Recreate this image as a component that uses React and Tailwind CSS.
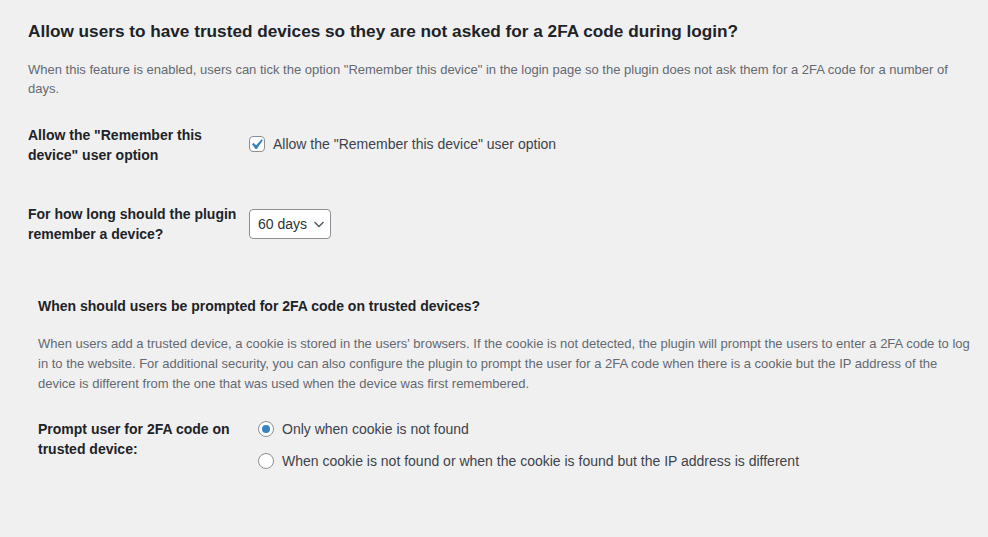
import React, { useState } from "react";

function Checkbox({ checked, onChange }) {
    return (
        <button
            type="button"
            onClick={onChange}
            className="w-4 h-4 shrink-0 bg-white border border-[#8c8f94] rounded-[4px] flex items-center justify-center overflow-visible"
        >
            {checked && (
                <svg className="shrink-0 -ml-[1px]" width="21" height="21" viewBox="0 0 20 20">
                    <path d="M14.83 4.89l1.34.94-5.81 8.38H9.02L5.78 9.67l1.34-1.25 2.57 2.4z" fill="#3582c4" />
                </svg>
            )}
        </button>
    );
}

function Radio({ checked, onClick }) {
    return (
        <button
            type="button"
            onClick={onClick}
            className="w-4 h-4 shrink-0 bg-white border border-[#8c8f94] rounded-full flex items-center justify-center"
        >
            {checked && <span className="w-2 h-2 rounded-full bg-[#3582c4]" />}
        </button>
    );
}

export default function App() {
    const [remember, setRemember] = useState(true);
    const [prompt, setPrompt] = useState("cookie");

    return (
        <div className="min-h-[537px] bg-[#f0f0f1] text-[#3c434a] font-['Liberation_Sans',sans-serif]">
            <div className="pl-[28px] pr-[20px] pt-[19px]">
                <h2 className="text-[17.2px] font-semibold text-[#1d2327] leading-[24px]">
                    Allow users to have trusted devices so they are not asked for a 2FA code during login?
                </h2>
                <p className="mt-[17px] text-[13px] leading-[19px] text-[#646970]">
                    When this feature is enabled, users can tick the option "Remember this device" in the login page so the plugin does not ask them for a 2FA code for a number of days.
                </p>

                <div className="mt-[27px]">
                    <div className="flex">
                        <div className="w-[221px] shrink-0 pr-[8px] text-[14px] font-semibold leading-[20px] text-[#1d2327]">
                            Allow the "Remember this device" user option
                        </div>
                        <label className="flex items-center gap-[8px] mt-[9px] h-[20px] text-[14px] cursor-pointer">
                            <Checkbox checked={remember} onChange={() => setRemember(!remember)} />
                            <span>Allow the "Remember this device" user option</span>
                        </label>
                    </div>

                    <div className="flex mt-[39px]">
                        <div className="w-[221px] shrink-0 pr-[8px] text-[14px] font-semibold leading-[20px] text-[#1d2327]">
                            For how long should the plugin remember a device?
                        </div>
                        <div className="mt-[5px] h-[30px] w-[82px] bg-white border border-[#8c8f94] rounded-[4px] flex items-center pl-[8px] text-[14px] text-[#2c3338]">
                            <span>60 days</span>
                            <svg className="ml-[6px]" width="12" height="12" viewBox="0 0 12 12">
                                <path d="M1.5 4l4.5 4.5L10.5 4" fill="none" stroke="#50575e" strokeWidth="1.4" />
                            </svg>
                        </div>
                    </div>
                </div>
            </div>

            <div className="pl-[38px] pr-[15px] mt-[52px]">
                <h3 className="text-[14px] font-semibold leading-[20px] text-[#1d2327]">
                    When should users be prompted for 2FA code on trusted devices?
                </h3>
                <p className="mt-[18px] text-[13px] leading-[20px] text-[#646970]">
                    When users add a trusted device, a cookie is stored in the users' browsers. If the cookie is not detected, the plugin will prompt the users to enter a 2FA code to log in to the website. For additional security, you can also configure the plugin to prompt the user for a 2FA code when there is a cookie but the IP address of the device is different from the one that was used when the device was first remembered.
                </p>

                <div className="flex mt-[25px]">
                    <div className="w-[220px] shrink-0 pr-[8px] text-[14px] font-semibold leading-[20px] text-[#1d2327]">
                        Prompt user for 2FA code on trusted device:
                    </div>
                    <div className="flex flex-col gap-[12px]">
                        <label className="flex items-center gap-[8px] h-[20px] text-[14px] cursor-pointer">
                            <Radio checked={prompt === "cookie"} onClick={() => setPrompt("cookie")} />
                            <span>Only when cookie is not found</span>
                        </label>
                        <label className="flex items-center gap-[8px] h-[20px] text-[14px] cursor-pointer">
                            <Radio checked={prompt === "ip"} onClick={() => setPrompt("ip")} />
                            <span>When cookie is not found or when the cookie is found but the IP address is different</span>
                        </label>
                    </div>
                </div>
            </div>
        </div>
    );
}
